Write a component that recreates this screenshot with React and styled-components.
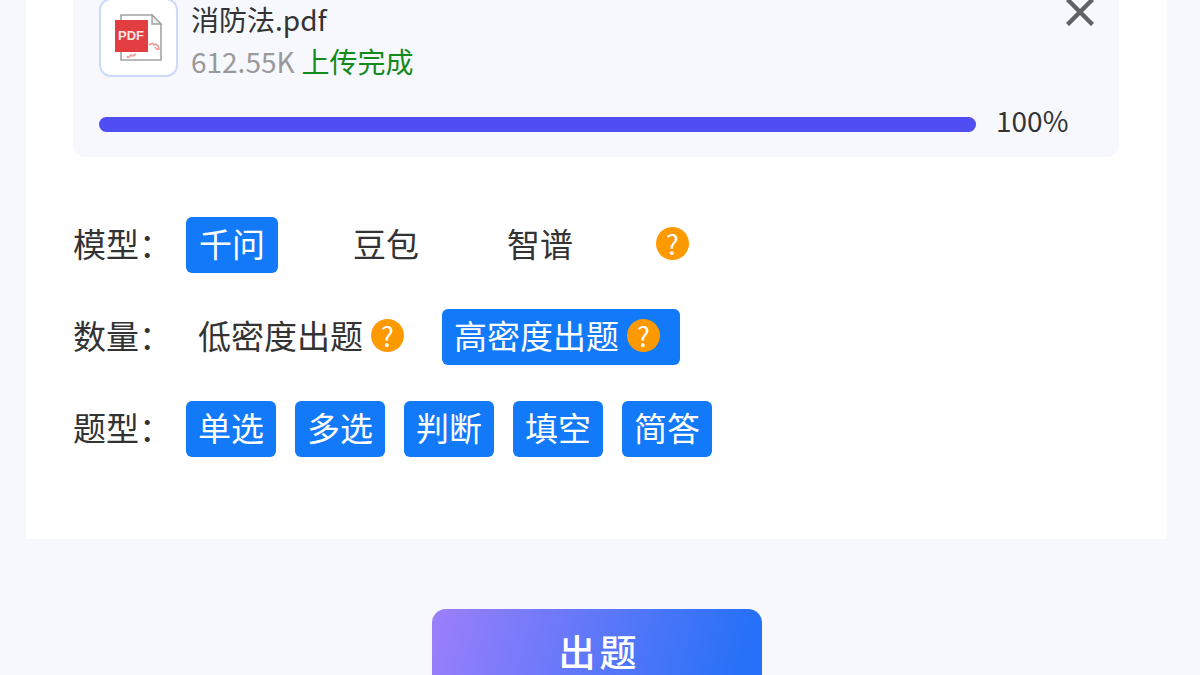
import React, { useState } from "react";
import styled, { createGlobalStyle } from "styled-components";

const GlobalStyle = createGlobalStyle`
  * { box-sizing: border-box; }
  body {
    margin: 0;
    background: #f6f8fe;
    color: #333;
    font-family: "Noto Sans CJK SC", sans-serif;
  }
`;

const Page = styled.main`
  height: 100vh;
  overflow: hidden;
  padding: 0 33px 0 26px;
`;

const Card = styled.section`
  display: flex;
  flex-direction: column;
  gap: 60px;
  padding: 0 48px 82px 47px;
  background: #fff;
`;

const UploadPanel = styled.div`
  display: flex;
  flex-direction: column;
  gap: 22px;
  margin-top: -26px;
  padding: 24px 25px 13px 26px;
  border-radius: 12px;
  background: #f6f8fe;
`;

const FileRow = styled.div`
  display: flex;
  gap: 13px;
`;

const FileIcon = styled.div`
  display: grid;
  place-items: center;
  width: 79px;
  height: 79px;
  border: 2px solid #cddafa;
  border-radius: 12px;
  background: #fff;
`;

const FileInfo = styled.div`
  flex: 1;
  font-size: 28px;
  line-height: 42px;
`;

const FileSize = styled.span`
  margin-right: 7px;
  color: #999;
`;

const Status = styled.span`
  color: #138a1c;
`;

const CloseButton = styled.button`
  align-self: flex-start;
  display: flex;
  padding: 0;
  border: 0;
  background: none;
  cursor: pointer;
`;

const ProgressRow = styled.div`
  display: flex;
  align-items: center;
  gap: 20px;
  height: 40px;
`;

const Track = styled.div`
  flex: 1;
  height: 15px;
  border-radius: 8px;
  background: #e4e7f2;
`;

const Bar = styled.div`
  height: 100%;
  border-radius: 8px;
  background: #504df3;
`;

const Percent = styled.span`
  width: 98px;
  padding-bottom: 8px;
  font-size: 28px;
  line-height: 32px;
`;

const Options = styled.div`
  display: flex;
  flex-direction: column;
  gap: 36px;
`;

const OptionRow = styled.div`
  display: flex;
  align-items: center;
  font-size: 33px;
  line-height: 52px;
`;

const RowLabel = styled.span`
  width: 113px;
  padding-bottom: 4px;
`;

const ChipGroup = styled.div`
  display: flex;
  align-items: center;
  gap: ${(p) => p.$gap}px;
`;

const ChipColumns = styled.div`
  display: grid;
  grid-template-columns: repeat(3, 154px) auto;
  justify-items: start;
  align-items: center;
`;

const HelpMark = styled.span`
  display: flex;
  align-items: center;
  justify-content: center;
  width: 33px;
  height: 33px;
  margin: 0 8px 4px;
  border-radius: 50%;
  background: #ff9900;
  color: #fff;
  font-size: 27px;
  line-height: 33px;
`;

const Chip = styled.label`
  display: flex;
  align-items: center;
  height: 56px;
  padding: 0 ${(p) => (p.$wide ? 13 : 12)}px 4px;
  border-radius: 6px;
  white-space: nowrap;
  cursor: pointer;
  &:has(input:checked) {
    background: #1279f8;
    color: #fff;
  }
  ${HelpMark} {
    margin-bottom: 0;
  }
`;

const ChipInput = styled.input`
  appearance: none;
  width: 0;
  height: 0;
  margin: 0;
`;

const SubmitArea = styled.div`
  display: flex;
  justify-content: center;
  padding-top: 70px;
`;

const SubmitButton = styled.button`
  width: 330px;
  height: 88px;
  padding: 0 0 4px 6px;
  border: 0;
  border-radius: 14px;
  background: linear-gradient(105deg, #9c7ffb 0%, #2671f7 92%);
  color: #fff;
  font-family: inherit;
  font-size: 37px;
  line-height: 48px;
  font-weight: 500;
  letter-spacing: 4px;
  cursor: pointer;
`;

function PdfIcon() {
  return (
    <svg width="48" height="50" viewBox="0 0 48 50" aria-hidden="true">
      <path d="M6 2H37L46 11V47H6Z" fill="#fff" stroke="#a3a3a3" strokeWidth="1.6" />
      <path d="M37 2V11H46Z" fill="#eee" stroke="#a3a3a3" strokeWidth="1.4" />
      <path
        d="M34 32q4-3 5 0q4-2 5 4q-3 1-4-2M12 43q1 3 4-1q2 2 5-1"
        fill="none"
        stroke="#f0a09e"
        strokeWidth="1.8"
      />
      <rect x="0" y="7" width="33" height="32" fill="#e23d40" />
      <text x="16" y="27" textAnchor="middle" fill="#fde4e4" fontFamily="Liberation Sans, sans-serif" fontSize="13" fontWeight="700">
        PDF
      </text>
    </svg>
  );
}

const models = ["千问", "豆包", "智谱"];
const densities = ["低密度出题", "高密度出题"];
const kinds = ["单选", "多选", "判断", "填空", "简答"];

export default function App() {
  const [model, setModel] = useState("千问");
  const [density, setDensity] = useState("高密度出题");
  const [picked, setPicked] = useState(kinds);
  const progress = 100;

  const toggle = (kind) =>
    setPicked((list) => (list.includes(kind) ? list.filter((k) => k !== kind) : [...list, kind]));

  return (
    <>
      <GlobalStyle />
      <Page>
        <Card>
          <UploadPanel>
            <FileRow>
              <FileIcon>
                <PdfIcon />
              </FileIcon>
              <FileInfo>
                <div>消防法.pdf</div>
                <div>
                  <FileSize>612.55K</FileSize>
                  <Status>上传完成</Status>
                </div>
              </FileInfo>
              <CloseButton type="button" aria-label="关闭">
                <svg width="28" height="28" viewBox="0 0 28 28">
                  <path d="M1.5 1.5L26.5 26.5M26.5 1.5L1.5 26.5" stroke="#606266" strokeWidth="4.4" />
                </svg>
              </CloseButton>
            </FileRow>
            <ProgressRow>
              <Track role="progressbar" aria-valuenow={progress} aria-label="上传进度">
                <Bar style={{ width: `${progress}%` }} />
              </Track>
              <Percent>{progress}%</Percent>
            </ProgressRow>
          </UploadPanel>

          <Options>
            <OptionRow role="radiogroup" aria-labelledby="model-label">
              <RowLabel id="model-label">模型：</RowLabel>
              <ChipColumns>
                {models.map((name) => (
                  <Chip key={name} $wide>
                    <ChipInput type="radio" name="model" checked={model === name} onChange={() => setModel(name)} />
                    {name}
                  </Chip>
                ))}
                <HelpMark>?</HelpMark>
              </ChipColumns>
            </OptionRow>
            <OptionRow role="radiogroup" aria-labelledby="density-label">
              <RowLabel id="density-label">数量：</RowLabel>
              <ChipGroup $gap={18}>
                {densities.map((name) => (
                  <Chip key={name}>
                    <ChipInput type="radio" name="density" checked={density === name} onChange={() => setDensity(name)} />
                    {name}
                    <HelpMark>?</HelpMark>
                  </Chip>
                ))}
              </ChipGroup>
            </OptionRow>
            <OptionRow role="group" aria-labelledby="kind-label">
              <RowLabel id="kind-label">题型：</RowLabel>
              <ChipGroup $gap={19}>
                {kinds.map((name) => (
                  <Chip key={name}>
                    <ChipInput type="checkbox" checked={picked.includes(name)} onChange={() => toggle(name)} />
                    {name}
                  </Chip>
                ))}
              </ChipGroup>
            </OptionRow>
          </Options>
        </Card>

        <SubmitArea>
          <SubmitButton type="button">出题</SubmitButton>
        </SubmitArea>
      </Page>
    </>
  );
}
